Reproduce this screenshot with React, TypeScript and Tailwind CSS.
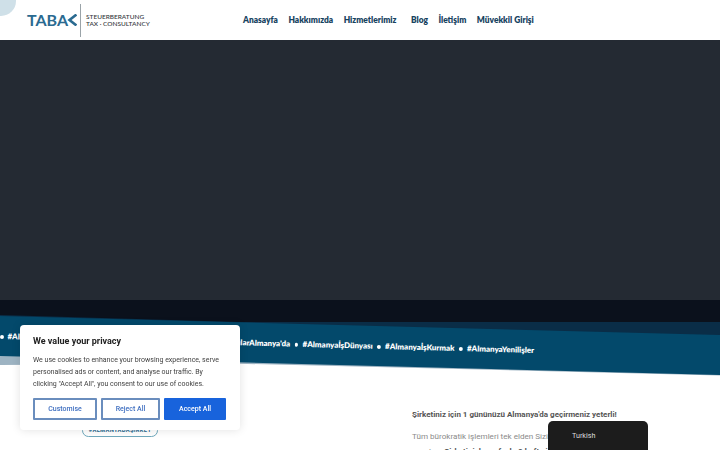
const navItems = [
  { label: "Anasayfa", cls: "" },
  { label: "Hakkımızda", cls: "" },
  { label: "Hizmetlerimiz", cls: "mr-[4px]" },
  { label: "Blog", cls: "" },
  { label: "İletişim", cls: "" },
  { label: "Müvekkil Girişi", cls: "" },
];

const tags = [
  "#AlmanyaŞirketlerin",
  "#AlmanyaVergiDanışmanlığı",
  "#YatırımcılarAlmanya'da",
  "#AlmanyaİşDünyası",
  "#AlmanyaİşKurmak",
  "#AlmanyaYenilişler",
];

function Header() {
  return (
    <header className="relative flex h-10 items-center bg-white">
      <div className="absolute -left-[14px] -top-[14px] h-[30px] w-[30px] rounded-full bg-[#cfe0e8]" />
      <div className="ml-[27px] flex w-[207px] items-center">
        <div className="flex w-[50px] items-center font-['Lato',sans-serif] text-[16px] font-bold leading-none text-[#2a6a90]">
          TABA
          <svg width="10" height="12" viewBox="0 0 10 12" className="-ml-[1px]">
            <path d="M9.5 0.5 L2.5 6 L9.5 11.5" fill="none" stroke="#2a6a90" strokeWidth="2.6" />
          </svg>
        </div>
        <div className="ml-[3px] h-[33px] w-px bg-[#9aa3a8]" />
        <div className="ml-[5px] font-['Lato',sans-serif] text-[6.5px] font-medium leading-[7.5px] text-[#33363a]">
          <div>STEUERBERATUNG</div>
          <div>TAX · CONSULTANCY</div>
        </div>
      </div>
      <nav className="ml-[9px] flex items-center gap-[10.5px] font-['Lato',sans-serif] text-[8.4px] font-extrabold text-[#17435f]">
        {navItems.map((item) => (
          <a key={item.label} className={item.cls}>
            {item.label}
          </a>
        ))}
      </nav>
    </header>
  );
}

function Ribbon() {
  return (
    <section className="relative h-[80px] overflow-hidden">
      <svg className="absolute inset-0" width="720" height="80" viewBox="0 0 720 80">
        <rect width="720" height="30" fill="#0b111c" />
        <polygon points="0,15 240,22 720,22 720,40 0,40" fill="#0a2d47" />
        <polygon points="0,65 230,63.5 720,75.5 720,74 0,55" fill="#9db3c2" />
        <polygon points="0,16 720,35 720,75 0,56" fill="#03496b" />
      </svg>
      <div className="absolute left-0 top-[30.5px] flex origin-left rotate-[1.5deg] items-center gap-[4px] whitespace-nowrap font-['Lato',sans-serif] text-[7.9px] font-extrabold text-white">
        <span className="h-[3.5px] w-[3.5px] rounded-full bg-white" />
        {tags.map((tag, i) => (
          <div key={tag} className="flex items-center gap-[4px]">
            {i > 0 && <span className="mx-[0.5px] h-[3.5px] w-[3.5px] rounded-full bg-white" />}
            <span>{tag}</span>
          </div>
        ))}
      </div>
    </section>
  );
}

function Content() {
  return (
    <main className="grid grid-cols-[412px_1fr] font-['Roboto',sans-serif]">
      <div className="pl-[82px] pt-[44px]">
        <div className="w-[76px] whitespace-nowrap rounded-[8px] border border-[#6fa9bd] text-center text-[5.8px] font-bold leading-[11px] tracking-[0.3px] text-[#2a6a90]">
          #ALMANYADAŞİRKET
        </div>
        <h1 className="mt-[9.5px] whitespace-nowrap text-[20px] font-bold leading-[24px] text-[#222222]">
          Almanya'da Şirket
        </h1>
      </div>
      <div className="pt-[29px]">
        <p className="whitespace-nowrap text-[8px] font-bold leading-[12px] text-[#555555]">
          Şirketiniz için 1 gününüzü Almanya'da geçirmeniz yeterli!
        </p>
        <p className="mt-[8px] whitespace-nowrap text-[8.1px] leading-[15px] text-[#8a8a8a]">
          Tüm bürokratik işlemleri tek elden Sizin için
          <br />
          yapalım. <b className="text-[#555555]">Şirketinizle en fazla 8 hafta içinde</b>
        </p>
      </div>
    </main>
  );
}

function CookieBanner() {
  return (
    <div className="fixed left-5 top-[325px] h-[105px] w-[220px] rounded-[4px] bg-white px-[13px] pt-[10px] font-['Roboto',sans-serif] shadow-[0_0_10px_rgba(0,0,0,0.12)]">
      <h2 className="text-[9px] font-bold leading-[13px] text-[#212121]">We value your privacy</h2>
      <p className="mt-[6px] text-[7px] leading-[12px] text-[#424242]">
        We use cookies to enhance your browsing experience, serve personalised ads or content, and analyse our traffic. By clicking "Accept All", you consent to our use of cookies.
      </p>
      <div className="mt-[8px] flex gap-[4px] text-[7px] font-medium">
        <button className="h-[22px] w-[64px] rounded-[1px] border-2 border-[#6a8dbd] text-[#3f6fc0]">Customise</button>
        <button className="h-[22px] w-[59px] rounded-[1px] border-2 border-[#6a8dbd] text-[#3f6fc0]">Reject All</button>
        <button className="h-[22px] w-[62px] rounded-[1px] bg-[#1863dc] text-white">Accept All</button>
      </div>
    </div>
  );
}

export default function App() {
  return (
    <div className="relative h-[450px] w-[720px] overflow-hidden bg-white">
      <Header />
      <div className="h-[260px] bg-[#242a33]" />
      <Ribbon />
      <Content />
      <CookieBanner />
      <div className="fixed left-[548px] top-[421px] h-[29px] w-[100px] rounded-t-[5px] bg-[#1c1c1c] pl-[24px] pt-[9px] font-['Roboto',sans-serif] text-[7.2px] leading-[12px] text-[#dddddd]">
        Turkish
      </div>
    </div>
  );
}
